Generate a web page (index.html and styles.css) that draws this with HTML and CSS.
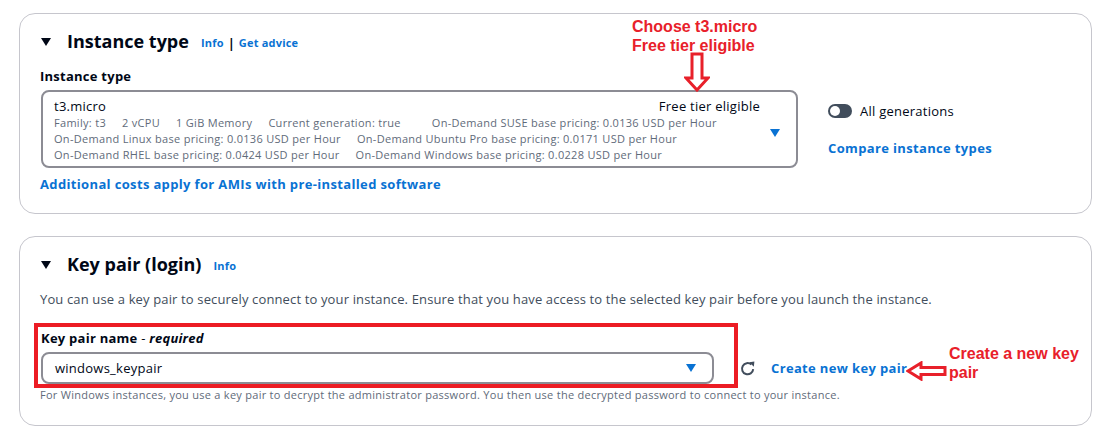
FILE: index.html
```html
<!DOCTYPE html>
<html>
<head>
<meta charset="utf-8">
<link rel="stylesheet" href="styles.css">
</head>
<body>
<div class="page">
  <section class="card card-instance">
    <div class="head">
      <span class="caret"></span>
      <h2>Instance type</h2>
      <span class="info-links"><a class="info">Info</a><span class="sep">|</span><a class="info">Get advice</a></span>
    </div>
    <div class="label">Instance type</div>
    <div class="type-row">
      <div class="select select-big">
        <div class="sel-main">
          <div class="sel-top"><span>t3.micro</span><span>Free tier eligible</span></div>
          <div class="tags"><span>Family: t3</span><span>2 vCPU</span><span>1 GiB Memory</span><span>Current generation: true</span><span class="tag-far">On-Demand SUSE base pricing: 0.0136 USD per Hour</span></div>
          <div class="tags"><span>On-Demand Linux base pricing: 0.0136 USD per Hour</span><span>On-Demand Ubuntu Pro base pricing: 0.0171 USD per Hour</span></div>
          <div class="tags"><span>On-Demand RHEL base pricing: 0.0424 USD per Hour</span><span>On-Demand Windows base pricing: 0.0228 USD per Hour</span></div>
        </div>
        <span class="tri"></span>
      </div>
      <div class="side">
        <div class="toggle-row"><span class="toggle"><span class="knob"></span></span>All generations</div>
        <a class="link">Compare instance types</a>
      </div>
    </div>
    <a class="link costs">Additional costs apply for AMIs with pre-installed software</a>
    <div class="anno anno-choose">Choose t3.micro<br>Free tier eligible</div>
    <svg class="arrow-down" width="26" height="40" viewBox="0 0 26 40"><polygon points="8,2 18,2 18,26 24,26 13,38 2,26 8,26" fill="#fff" stroke="#e8202a" stroke-width="3" stroke-linejoin="miter"/></svg>
  </section>

  <section class="card card-key">
    <div class="head">
      <span class="caret"></span>
      <h2>Key pair (login)</h2>
      <span class="info-links"><a class="info">Info</a></span>
    </div>
    <p class="desc">You can use a key pair to securely connect to your instance. Ensure that you have access to the selected key pair before you launch the instance.</p>
    <div class="label key-label">Key pair name <span class="dash">-</span> <i>required</i></div>
    <div class="key-row">
      <div class="select select-key"><span>windows_keypair</span><span class="tri"></span></div>
      <svg class="refresh" width="18" height="18" viewBox="0 0 18 18"><path d="M14.2 9.2 A5.6 5.6 0 1 1 12.4 4.6" fill="none" stroke="#414d5c" stroke-width="2"/><polygon points="10.3,2.2 15.4,1.6 14.8,6.8" fill="#414d5c"/></svg>
      <a class="link">Create new key pair</a>
    </div>
    <p class="helper">For Windows instances, you use a key pair to decrypt the administrator password. You then use the decrypted password to connect to your instance.</p>
    <div class="redbox"></div>
    <svg class="arrow-left" width="42" height="20" viewBox="0 0 42 20"><polygon points="2,10 15,2 15,6.5 39,6.5 39,13.5 15,13.5 15,18" fill="#fff" stroke="#e8202a" stroke-width="3"/></svg>
    <div class="anno anno-create">Create a new key<br>pair</div>
  </section>
</div>
</body>
</html>
```

FILE: styles.css
```css
* { box-sizing: border-box; }
html, body { margin: 0; padding: 0; background: #fff; }
body {
  font-family: "Open Sans", "Noto Sans", sans-serif;
  color: #000716;
  width: 1099px;
  height: 431px;
  overflow: hidden;
}
.page {
  padding: 13px 0 0 19px;
  display: flex;
  flex-direction: column;
  gap: 22px;
}
.card {
  position: relative;
  width: 1073px;
  border: 1px solid #c6c6cd;
  border-radius: 16px;
  padding: 0 20px;
  display: flex;
  flex-direction: column;
  align-items: flex-start;
}
.card-instance { height: 201px; }
.card-key { height: 190px; }
.head {
  display: flex;
  align-items: center;
  height: 30px;
  margin-top: 12px;
}
.caret {
  width: 0; height: 0;
  border-left: 5.5px solid transparent;
  border-right: 5.5px solid transparent;
  border-top: 8px solid #000716;
  margin: 1px 16px 0 1px;
}
h2 {
  margin: 0;
  font-size: 18px;
  font-weight: 700;
  letter-spacing: 0;
}
.info-links { display: flex; align-items: center; margin-left: 12px; margin-top: 3px; }
.info { color: #0972d3; font-size: 11px; font-weight: 700; letter-spacing: 0.2px; }
.sep { font-size: 13px; font-weight: 700; margin: 0 4px; color: #000716; }
.label {
  font-size: 13px;
  font-weight: 700;
  margin-top: 11px;
  line-height: 18px;
  letter-spacing: 0.25px;
}
.type-row {
  display: flex;
  margin-top: 5px;
  margin-left: 1px;
}
.select {
  border: 2px solid #8c8c94;
  border-radius: 8px;
  display: flex;
  align-items: center;
}
.select-big {
  width: 757px;
  height: 78px;
  padding: 1px 16px 0 11px;
}
.sel-main { flex: 1; display: flex; flex-direction: column; }
.sel-top {
  display: flex;
  justify-content: space-between;
  font-size: 13px;
  line-height: 18px;
  padding-right: 10px;
  letter-spacing: 0.25px;
}
.tags {
  display: flex;
  gap: 16px;
  font-size: 11px;
  color: #5f6b7a;
  line-height: 16px;
  letter-spacing: 0.3px;
}
.tag-far { margin-left: 15px; }
.tri {
  width: 0; height: 0;
  border-left: 5px solid transparent;
  border-right: 5px solid transparent;
  border-top: 8px solid #0972d3;
}
.select-big .tri { margin-top: 6px; }
.side {
  margin-left: 30px;
  padding-top: 12px;
  display: flex;
  flex-direction: column;
  gap: 19px;
}
.toggle-row {
  display: flex;
  align-items: center;
  gap: 8px;
  font-size: 13px;
  line-height: 18px;
  letter-spacing: 0.25px;
}
.toggle {
  width: 24px;
  height: 14px;
  border-radius: 7px;
  background: #414d5c;
  position: relative;
}
.knob {
  position: absolute;
  left: 2px; top: 2px;
  width: 10px; height: 10px;
  border-radius: 50%;
  background: #fff;
}
.link {
  color: #0972d3;
  font-size: 13px;
  font-weight: 700;
  line-height: 18px;
  letter-spacing: 0.35px;
}
.costs { margin-top: 7px; }
.anno {
  position: absolute;
  color: #e8202a;
  font-family: "Liberation Sans", Arial, sans-serif;
  font-weight: 700;
  font-size: 16px;
  line-height: 19px;
}
.anno-choose { left: 612px; top: 3px; }
.arrow-down { position: absolute; left: 664px; top: 38px; }
.desc {
  margin: 11px 0 0;
  font-size: 13px;
  line-height: 18px;
  color: #414d5c;
  letter-spacing: 0.14px;
}
.key-label { margin-top: 21px; margin-left: 1px; }
.dash { font-weight: 400; }
.key-row {
  display: flex;
  align-items: center;
  margin-top: 5px;
  margin-left: 1px;
}
.select-key {
  width: 673px;
  height: 32px;
  padding: 0 16px 0 12px;
  justify-content: space-between;
  font-size: 13px;
  letter-spacing: 0.25px;
}
.refresh { margin-left: 25px; margin-top: 1px; }
.key-row .link { margin-left: 14px; }
.helper {
  margin: 3px 0 0;
  font-size: 11px;
  line-height: 16px;
  color: #5f6b7a;
  letter-spacing: 0.27px;
}
.redbox {
  position: absolute;
  left: 14px;
  top: 86px;
  width: 704px;
  height: 65px;
  border: 4px solid #ec1c24;
}
.arrow-left { position: absolute; left: 886px; top: 124px; }
.anno-create { left: 929px; top: 107px; }
```
